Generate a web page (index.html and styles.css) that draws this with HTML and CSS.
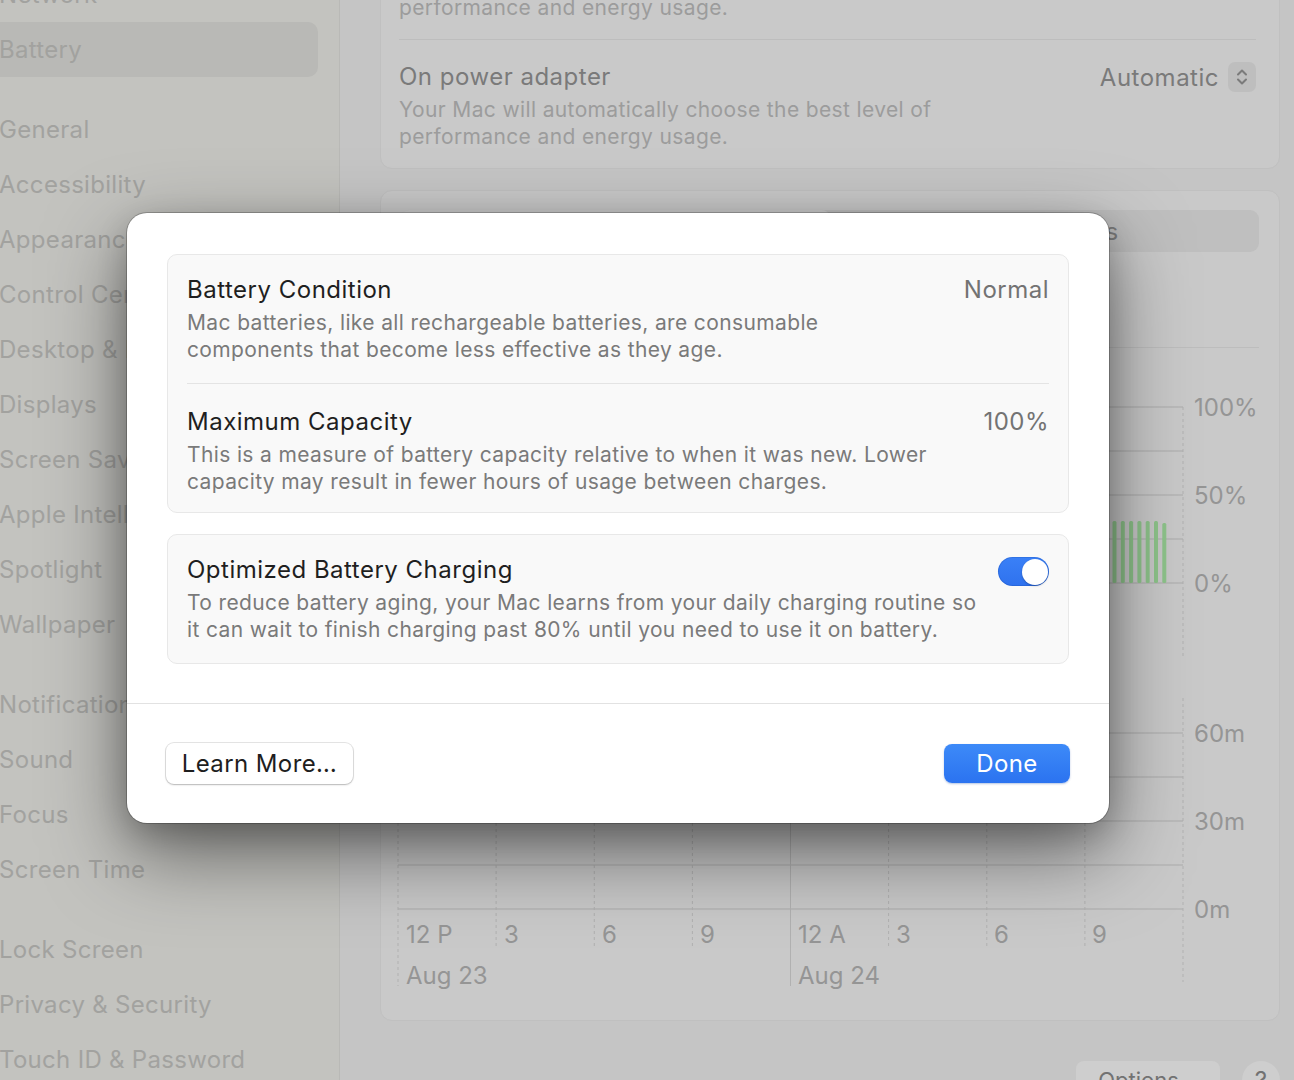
FILE: index.html
```html
<!DOCTYPE html>
<html lang="en">

<head>
  <meta charset="UTF-8">
  <meta name="viewport" content="width=device-width, initial-scale=1.0">
  <title>Battery</title>
  <link rel="stylesheet" href="styles.css">
</head>

<body>
  <div class="window">
    <aside class="sidebar">
      <ul class="nav">
        <li>Network</li>
        <li class="active">Battery</li>
        <li class="gap">General</li>
        <li>Accessibility</li>
        <li>Appearance</li>
        <li>Control Centre</li>
        <li>Desktop &amp; Dock</li>
        <li>Displays</li>
        <li>Screen Saver</li>
        <li>Apple Intelligence &amp; Siri</li>
        <li>Spotlight</li>
        <li>Wallpaper</li>
        <li class="gap">Notifications</li>
        <li>Sound</li>
        <li>Focus</li>
        <li>Screen Time</li>
        <li class="gap">Lock Screen</li>
        <li>Privacy &amp; Security</li>
        <li>Touch ID &amp; Password</li>
      </ul>
    </aside>

    <main class="content">
      <div class="scroller">
        <section class="card">
          <div class="row">
            <div>
              <div class="row-title">On battery</div>
              <div class="row-desc">Your Mac will automatically choose the best level of<br>performance and energy usage.</div>
            </div>
            <div class="popup">Automatic
              <span class="stepper">
                <svg width="14" height="22" viewBox="0 0 14 22">
                  <path d="M3 8.5 L7 4.5 L11 8.5 M3 13.5 L7 17.5 L11 13.5" />
                </svg>
              </span>
            </div>
          </div>
          <div class="row">
            <div>
              <div class="row-title">On power adapter</div>
              <div class="row-desc">Your Mac will automatically choose the best level of<br>performance and energy usage.</div>
            </div>
            <div class="popup">Automatic
              <span class="stepper">
                <svg width="14" height="22" viewBox="0 0 14 22">
                  <path d="M3 8.5 L7 4.5 L11 8.5 M3 13.5 L7 17.5 L11 13.5" />
                </svg>
              </span>
            </div>
          </div>
        </section>

        <section class="card usage">
          <div class="segmented">
            <div class="seg selected">Last 24 Hours</div>
            <div class="seg">Last 10 Days</div>
          </div>
          <div class="chart-head"></div>
          <svg class="chart" width="897" height="672" viewBox="0 0 897 672">
            <g class="hline">
              <line x1="17" y1="59" x2="802" y2="59" />
              <line x1="17" y1="103" x2="802" y2="103" />
              <line x1="17" y1="147" x2="802" y2="147" />
              <line x1="17" y1="191" x2="802" y2="191" />
              <line x1="17" y1="235" x2="802" y2="235" />
              <line x1="17" y1="385" x2="802" y2="385" />
              <line x1="17" y1="429" x2="802" y2="429" />
              <line x1="17" y1="473" x2="802" y2="473" />
              <line x1="17" y1="517" x2="802" y2="517" />
              <line x1="17" y1="561" x2="802" y2="561" />
            </g>
            <g class="vdash">
              <line x1="17" y1="59" x2="17" y2="309" />
              <line x1="115.1" y1="59" x2="115.1" y2="270" />
              <line x1="213.3" y1="59" x2="213.3" y2="270" />
              <line x1="311.4" y1="59" x2="311.4" y2="270" />
              <line x1="507.6" y1="59" x2="507.6" y2="270" />
              <line x1="605.8" y1="59" x2="605.8" y2="270" />
              <line x1="703.9" y1="59" x2="703.9" y2="270" />
              <line x1="802" y1="59" x2="802" y2="309" />
              <line x1="17" y1="385" x2="17" y2="638" />
              <line x1="115.1" y1="385" x2="115.1" y2="598" />
              <line x1="213.3" y1="385" x2="213.3" y2="598" />
              <line x1="311.4" y1="385" x2="311.4" y2="598" />
              <line x1="507.6" y1="385" x2="507.6" y2="598" />
              <line x1="605.8" y1="385" x2="605.8" y2="598" />
              <line x1="703.9" y1="385" x2="703.9" y2="598" />
              <line x1="802" y1="350" x2="802" y2="634" />
            </g>
            <g class="vsolid">
              <line x1="409.5" y1="59" x2="409.5" y2="309" />
              <line x1="409.5" y1="385" x2="409.5" y2="638" />
            </g>
            <g class="bars">
              <rect x="690" y="176" width="4" height="59" rx="1.5" />
              <rect x="698.3" y="174" width="4" height="61" rx="1.5" />
              <rect x="706.6" y="173" width="4" height="62" rx="1.5" />
              <rect x="714.9" y="173" width="4" height="62" rx="1.5" />
              <rect x="723.2" y="173" width="4" height="62" rx="1.5" />
              <rect x="731.5" y="173" width="4" height="62" rx="1.5" />
              <rect x="739.8" y="173" width="4" height="62" rx="1.5" />
              <rect x="748.1" y="173" width="4" height="62" rx="1.5" />
              <rect x="756.4" y="173" width="4" height="62" rx="1.5" />
              <rect x="764.7" y="173" width="4" height="62" rx="1.5" />
              <rect x="773" y="173" width="4" height="62" rx="1.5" />
              <rect x="781.3" y="175" width="4" height="60" rx="1.5" />
            </g>
            <g class="label">
              <text x="813" y="59">100%</text>
              <text x="813" y="147">50%</text>
              <text x="813" y="235">0%</text>
              <text x="813" y="385">60m</text>
              <text x="813" y="473">30m</text>
              <text x="813" y="561">0m</text>

              <text x="25" y="586">12 P</text>
              <text x="123" y="586">3</text>
              <text x="221" y="586">6</text>
              <text x="319" y="586">9</text>
              <text x="417" y="586">12 A</text>
              <text x="515" y="586">3</text>
              <text x="613" y="586">6</text>
              <text x="711" y="586">9</text>
              <text x="25" y="627">Aug 23</text>
              <text x="417" y="627">Aug 24</text>
            </g>
          </svg>
        </section>

        <div class="actions">
          <button class="btn-options">Options…</button>
          <button class="btn-help">?</button>
        </div>
      </div>
    </main>
  </div>

  <div class="sheet">
    <div class="sheet-body">
      <div class="group">
        <div class="group-row">
          <div>
            <div class="g-title">Battery Condition</div>
            <div class="g-desc">Mac batteries, like all rechargeable batteries, are consumable<br>components that become less effective as they age.</div>
          </div>
          <div class="g-value">Normal</div>
        </div>
        <div class="group-row lower">
          <div>
            <div class="g-title">Maximum Capacity</div>
            <div class="g-desc">This is a measure of battery capacity relative to when it was new. Lower<br>capacity may result in fewer hours of usage between charges.</div>
          </div>
          <div class="g-value">100%</div>
        </div>
      </div>

      <div class="group">
        <div class="group-row">
          <div>
            <div class="g-title">Optimized Battery Charging</div>
            <div class="g-desc">To reduce battery aging, your Mac learns from your daily charging routine so<br>it can wait to finish charging past 80% until you need to use it on battery.</div>
          </div>
          <div class="switch on"><div class="knob"></div></div>
        </div>
      </div>
    </div>

    <div class="sheet-footer">
      <button class="btn-learn">Learn More…</button>
      <button class="btn-done">Done</button>
    </div>
  </div>
</body>

</html>
```

FILE: styles.css
```css
body {
  margin: 0;
  height: 1080px;
  overflow: hidden;
  font-family: Inter, "Noto Sans", sans-serif;
  background: #c5c5c5;
}

.window {
  display: flex;
  height: 1080px;
  overflow: hidden;
}

/* sidebar */

.sidebar {
  width: 339px;
  flex: none;
  background: #c3c3bf;
  border-right: 1px solid #b9b9b6;
  overflow: hidden;
}

.nav {
  list-style: none;
  margin: -33px 0 0;
  padding: 0 21px 0 0;
}

.nav li {
  height: 55px;
  line-height: 55px;
  margin-left: -20px;
  padding-left: 19px;
  border-radius: 10px;
  font-size: 24px;
  letter-spacing: 0.3px;
  color: #a2a29f;
  white-space: nowrap;
}

.nav li.active {
  background: #b9b9b6;
}

.nav li.gap {
  margin-top: 25px;
}

/* main pane */

.content {
  flex: 1;
  padding: 0 14px 0 40px;
  overflow: hidden;
}

.scroller {
  margin-top: -90px;
}

.card {
  background: #c9c9c9;
  border: 1px solid #c0c0c0;
  border-radius: 12px;
  padding: 0 23px 0 18px;
}

.row {
  display: flex;
  justify-content: space-between;
  padding: 22px 0 18px;
  border-bottom: 1px solid #bdbdbd;
}

.row:last-child {
  border-bottom: none;
}

.row-title {
  font-size: 24px;
  line-height: 30px;
  letter-spacing: 0.5px;
  color: #7a7a7a;
}

.row-desc {
  margin-top: 4px;
  font-size: 21px;
  line-height: 27px;
  letter-spacing: 0.37px;
  color: #9c9c9c;
}

.popup {
  display: flex;
  align-items: center;
  gap: 9px;
  height: 30px;
  font-size: 24px;
  letter-spacing: 0.5px;
  color: #7a7a7a;
}

.stepper {
  display: flex;
  align-items: center;
  justify-content: center;
  width: 28px;
  height: 30px;
  border-radius: 7px;
  background: #bebebe;
}

.stepper path {
  fill: none;
  stroke: #7b7b7b;
  stroke-width: 2;
  stroke-linecap: round;
  stroke-linejoin: round;
}

.usage {
  margin-top: 21px;
  padding: 0;
}

.segmented {
  display: flex;
  height: 42px;
  margin: 19px 20px 0;
  border-radius: 9px;
  background: #bfbfbf;
}

.seg {
  flex: 1;
  display: flex;
  align-items: center;
  justify-content: center;
  font-size: 24px;
  letter-spacing: 0.5px;
  color: #7d7d7d;
  border-radius: 8px;
}

.seg.selected {
  background: #cbcbcb;
  box-shadow: 0 1px 2px rgba(0, 0, 0, 0.08);
}

.chart-head {
  height: 96px;
  margin: 0 20px;
  box-sizing: border-box;
  border-bottom: 1px solid #bdbdbd;
}

.chart {
  display: block;
}

.hline line {
  stroke: #b5b5b5;
  stroke-width: 1.5;
}

.vdash line {
  stroke: #b1b1b1;
  stroke-width: 1;
  stroke-dasharray: 3 3;
}

.vsolid line {
  stroke: #b1b1b1;
  stroke-width: 1;
}

.bars rect {
  fill: #8ec48b;
}

.label text {
  font-size: 24px;
  fill: #959595;
  dominant-baseline: central;
}

.actions {
  display: flex;
  justify-content: flex-end;
  gap: 22px;
  margin-top: 40px;
}

.btn-options {
  width: 144px;
  height: 38px;
  border: none;
  border-radius: 8px;
  background: #cecece;
  font-family: inherit;
  font-size: 22px;
  color: #727272;
}

.btn-help {
  width: 38px;
  height: 38px;
  border: none;
  border-radius: 50%;
  background: #cecece;
  font-family: inherit;
  font-size: 24px;
  color: #727272;
}

/* battery health sheet */

.sheet {
  position: absolute;
  left: 127px;
  top: 213px;
  width: 982px;
  background: #ffffff;
  border-radius: 20px;
  box-shadow: 0 0 0 1px rgba(0, 0, 0, 0.22), 0 30px 80px rgba(0, 0, 0, 0.5), 0 10px 30px rgba(0, 0, 0, 0.18);
}

.sheet-body {
  display: flex;
  flex-direction: column;
  gap: 21px;
  padding: 41px 40px 39px;
}

.group {
  background: #f9f9f9;
  border: 1px solid #e8e8e8;
  border-radius: 10px;
  padding: 0 19px;
}

.group-row {
  display: flex;
  justify-content: space-between;
  padding: 20px 0;
  border-bottom: 1px solid #e4e4e4;
}

.group-row.lower {
  padding: 23px 0 17px;
}

.group-row:last-child {
  border-bottom: none;
}

.g-title {
  font-size: 24px;
  line-height: 30px;
  letter-spacing: 0.5px;
  color: #1f1f1f;
}

.g-desc {
  margin-top: 4px;
  font-size: 21px;
  line-height: 27px;
  letter-spacing: 0.37px;
  color: #7a7a7a;
}

.g-value {
  font-size: 24px;
  line-height: 30px;
  letter-spacing: 0.5px;
  color: #737373;
}

.switch {
  display: flex;
  justify-content: flex-end;
  align-items: center;
  width: 51px;
  height: 29px;
  margin-top: 2px;
  padding: 0 1.5px;
  box-sizing: border-box;
  border-radius: 15px;
  background: linear-gradient(#3a80f7, #2f72ee);
  box-shadow: inset 0 0 0 1px rgba(0, 40, 120, 0.15);
}

.knob {
  width: 26px;
  height: 26px;
  border-radius: 50%;
  background: #ffffff;
  box-shadow: 0 1px 2px rgba(0, 0, 0, 0.25);
}

.sheet-footer {
  display: flex;
  justify-content: space-between;
  align-items: center;
  padding: 39px;
  border-top: 1px solid #e2e2e2;
}

.btn-learn {
  width: 187px;
  height: 41px;
  border: none;
  border-radius: 8px;
  background: #ffffff;
  box-shadow: 0 0 0 1px rgba(0, 0, 0, 0.1), 0 1px 2px rgba(0, 0, 0, 0.2);
  font-family: inherit;
  font-size: 24px;
  letter-spacing: 0.4px;
  color: #1e1e1e;
}

.btn-done {
  width: 126px;
  height: 39px;
  border: none;
  border-radius: 8px;
  background: linear-gradient(#3d8af8, #2b73f0);
  box-shadow: 0 1px 2px rgba(0, 60, 160, 0.3);
  font-family: inherit;
  font-size: 24px;
  letter-spacing: 0.4px;
  color: #ffffff;
}
```
